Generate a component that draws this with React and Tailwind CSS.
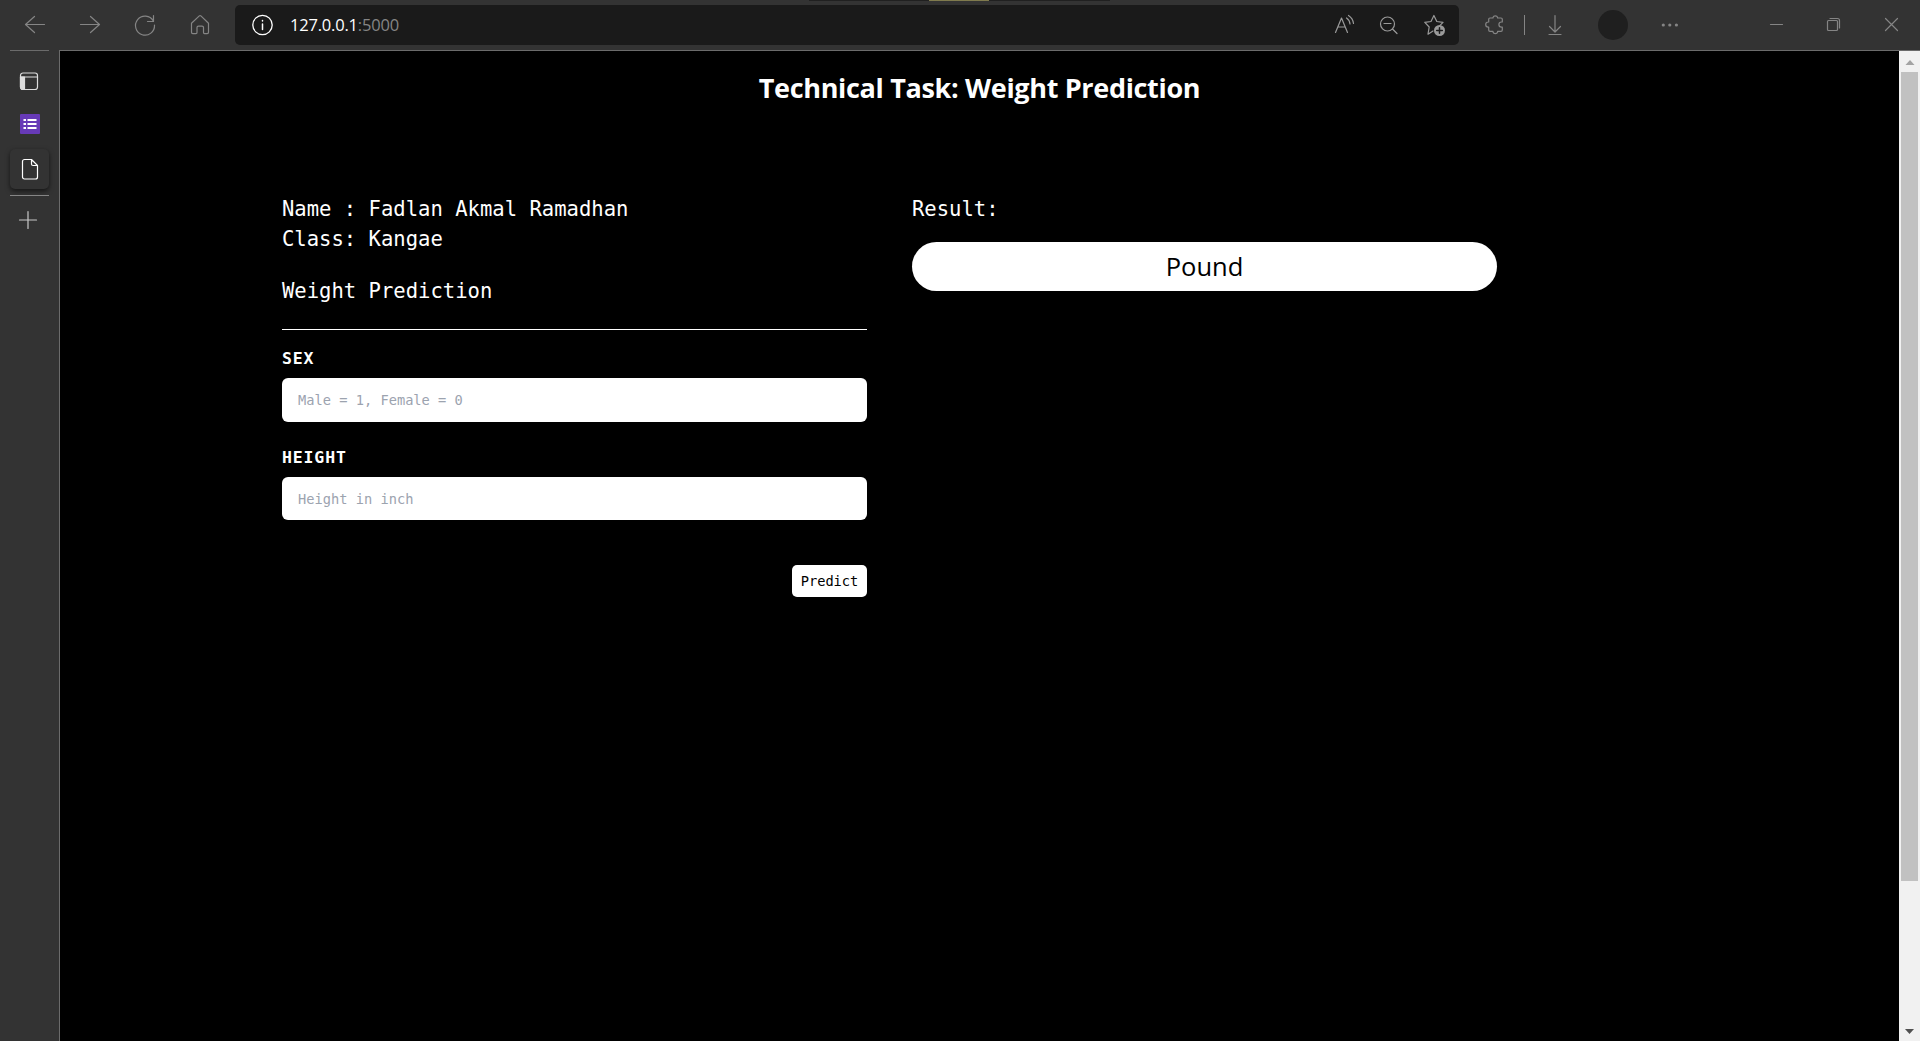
import React from "react";

const line = { fill: "none", stroke: "currentColor", strokeWidth: 1.2, strokeLinecap: "round", strokeLinejoin: "round" };

function Icon({ w = 24, h = 24, className = "", children }) {
  return (
    <svg width={w} height={h} viewBox={`0 0 ${w} ${h}`} className={`block shrink-0 ${className}`} {...line}>
      {children}
    </svg>
  );
}

function Toolbar() {
  return (
    <header className="flex h-[50px] w-full shrink-0 items-start bg-[#333333] text-[#858585]">
      <nav className="flex w-[235px] shrink-0 gap-[31px] pt-[13px] pl-[23px]">
        <Icon><path d="M2.5 11.5h19M11.5 3.5l-9 8 9 8" /></Icon>
        <Icon><path d="M2.5 11.5h19M12.500 3.500l9 8-9 8" /></Icon>
        <Icon><path d="M20.300 8A9.500 9.500 0 1 0 21.500 12M20.500 2.500v6h-6" /></Icon>
        <Icon><path d="M3.500 10.300L11.300 2.900a1.200 1.200 0 0 1 1.600 0L20.500 10.300v9a1.300 1.300 0 0 1-1.300 1.300H16.500a1 1 0 0 1-1-1v-5a1.500 1.500 0 0 0-1.500-1.500h-3.500a1.500 1.500 0 0 0-1.500 1.500v5a1 1 0 0 1-1 1H4.800a1.300 1.300 0 0 1-1.300-1.300z" /></Icon>
      </nav>
      <div className="mt-[5px] flex h-10 w-[1224px] shrink-0 items-center rounded-[5px] bg-[#1a1a1a] pl-[15px]">
        <Icon className="text-white">
          <circle cx="12.500" cy="12" r="9.700" strokeWidth="1.300" />
          <path d="M12.500 11v5.500M12.500 7.500v.5" strokeWidth="1.500" />
        </Icon>
        <p className="ml-4 font-['Open_Sans',sans-serif] text-[16.500px] leading-6 tracking-[-0.200px] text-[#858585]">
          <span className="text-white">127.0.0.1</span>:5000
        </p>
        <div className="ml-auto flex gap-[21px] pr-[11px] text-[#9a9a9a]">
          <Icon><path d="M1.500 19.500L7.500 5l6 14.500M3.800 14h7.400M12.500 5a8 8 0 0 1 3.500 6M14.500 2.500a11 11 0 0 1 5 8" /></Icon>
          <Icon><circle cx="8.500" cy="11" r="7" /><path d="M5 10.500h7M13.500 16l4.500 4.500" /></Icon>
          <Icon>
            <path d="M9 18l-5 3.200 1.200-7.200L.8 9.300l6.200-.8 2.900-6 2.900 6 6.200.8-3 3" />
            <circle cx="15.500" cy="17.500" r="5.500" fill="currentColor" stroke="none" />
            <path d="M12.700 17.500h5.600M15.500 14.700v5.600" stroke="#1a1a1a" strokeWidth="1.500" />
          </Icon>
        </div>
      </div>
      <div className="flex h-[50px] min-w-0 flex-1 items-center">
        <Icon className="ml-6">
          <path d="M7 5H10V4.500a2.400 2.400 0 0 1 4.600 0V5H18a1.300 1.300 0 0 1 1.300 1.300V9H18.500a2.500 2.500 0 0 0 0 5.200H19.300V17a1.300 1.300 0 0 1-1.300 1.300H14.600V19a2.400 2.400 0 0 1-4.600 0V18.300H7A1.300 1.300 0 0 1 5.700 17V14.200H5.300a2.500 2.500 0 0 1 0-5.200H5.700V6.300A1.300 1.300 0 0 1 7 5z" />
        </Icon>
        <div className="ml-[17px] h-5 w-px bg-[#858585]" />
        <Icon className="ml-[18px]"><path d="M12 2.500V19M6.500 13.500L12 19l5.500-5.500M6 21.500h12" /></Icon>
        <div className="ml-[31px] h-[30px] w-[30px] rounded-full bg-[#1f1f1f]" />
        <Icon className="ml-[30px]">
          <g fill="currentColor" stroke="none"><circle cx="5.300" cy="12" r="1.600" /><circle cx="11.800" cy="12" r="1.600" /><circle cx="18.400" cy="12" r="1.600" /></g>
        </Icon>
        <Icon className="ml-[84px]"><path d="M4.500 11.500h12" /></Icon>
        <Icon className="ml-[33px]"><rect x="4.500" y="7.500" width="10" height="10" rx="1" /><path d="M7 5.500h7.500a2 2 0 0 1 2 2V15" /></Icon>
        <Icon className="ml-[34px]"><path d="M4.500 5.500l12 12M16.500 5.500l-12 12" /></Icon>
      </div>
    </header>
  );
}

function Sidebar() {
  return (
    <aside className="flex w-[60px] shrink-0 flex-col border-r border-[#6b6b6b] bg-[#333333]">
      <div className="ml-2.5 h-px w-[39px] bg-[#6b6b6b]" />
      <Icon className="mt-[18px] ml-[18px] text-[#dddddd]">
        <rect x="2.500" y="4" width="17" height="16.500" rx="2.500" />
        <path d="M2.500 8h17" /><path d="M2.500 8H6.500v12.500H5A2.500 2.500 0 0 1 2.500 18z" fill="currentColor" />
      </Icon>
      <svg width="20" height="20" viewBox="0 0 20 20" className="mt-[21px] ml-5 block">
        <rect width="20" height="20" rx="1" fill="#673ab7" />
        <path d="M3.500 6H6M7.500 6h9M3.500 10H6M7.500 10h9M3.500 14H6M7.500 14h9" stroke="#fff" strokeWidth="2" />
      </svg>
      <div className="mt-[15px] ml-2.5 flex h-10 w-[39px] items-center justify-center rounded-[5px] bg-[#333333] text-white shadow-[0_2px_5px_rgba(0,0,0,0.6)]">
        <Icon><path d="M6.500 2.500h7l6 6v11.500a2 2 0 0 1-2 2h-11a2 2 0 0 1-2-2V4.500a2 2 0 0 1 2-2zM13.500 2.500V7a1.500 1.500 0 0 0 1.500 1.500h4.500" /></Icon>
      </div>
      <div className="mt-1.5 ml-2.5 h-px w-[39px] bg-[#858585]" />
      <Icon className="mt-3 ml-4 text-[#c8c8c8]"><path d="M3.500 12h17M12 3.500v17" /></Icon>
    </aside>
  );
}

function Field({ label, placeholder, className, inputClass }) {
  return (
    <label className={`block ${className}`}>
      <span className="block text-[16.500px] leading-[27px] font-bold tracking-[0.850px]">{label}</span>
      <input
        placeholder={placeholder}
        className={`block w-full rounded-[6px] bg-white px-4 text-[13.700px] text-black placeholder:text-[#9ca3af] ${inputClass}`}
      />
    </label>
  );
}

function Page() {
  return (
    <main className="min-w-0 flex-1 bg-black text-white">
      <h1 className="pt-[17px] text-center font-['Open_Sans',sans-serif] text-[27px] leading-10 font-bold tracking-[-0.330px]">
        Technical Task: Weight Prediction
      </h1>
      <div className="mt-[86px] ml-[222px] flex gap-[45px] font-['DejaVu_Sans_Mono',monospace]">
        <section className="w-[585px]">
          <div className="text-[20.550px] leading-[30px] whitespace-pre">
            <p>Name : Fadlan Akmal Ramadhan</p>
            <p>Class: Kangae</p>
            <p className="mt-[22px]">Weight Prediction</p>
          </div>
          <div className="mt-[23px] h-px bg-white" />
          <Field label="SEX" placeholder="Male = 1, Female = 0" className="mt-[15px]" inputClass="mt-1.5 h-11" />
          <Field label="HEIGHT" placeholder="Height in inch" className="mt-[22px]" inputClass="mt-1.5 h-[43px]" />
          <button className="mt-[45px] ml-auto block h-8 w-[75px] rounded-[5px] bg-white text-[13.700px] text-black">Predict</button>
        </section>
        <section className="w-[585px]">
          <h2 className="text-[20.550px] leading-[30px]">Result:</h2>
          <div className="mt-[18px] flex h-[49px] items-center justify-center rounded-full bg-white font-['Open_Sans',sans-serif] text-[25.500px] text-black">
            Pound
          </div>
        </section>
      </div>
    </main>
  );
}

function Scrollbar() {
  return (
    <div className="flex w-[21px] shrink-0 flex-col items-center bg-[#f1f1f1]">
      <svg width="17" height="21" viewBox="0 0 17 21"><path d="M4.500 14h9L9 9z" fill="#a3a3a3" /></svg>
      <div className="h-[809px] w-[17px] bg-[#c1c1c1]" />
      <svg width="17" height="21" viewBox="0 0 17 21" className="mt-auto"><path d="M4 9h9l-4.500 5z" fill="#505050" /></svg>
    </div>
  );
}

export default function App() {
  return (
    <div className="relative flex h-[1041px] w-[1920px] flex-col overflow-hidden bg-[#333333]">
      <div className="absolute top-0 left-[809px] h-px w-[301px] bg-[#202020] pl-[120px]">
        <div className="h-px w-[60px] bg-[#7f7a4d]" />
      </div>
      <Toolbar />
      <div className="flex min-h-0 flex-1">
        <Sidebar />
        <div className="flex min-w-0 flex-1 border-t border-[#6b6b6b]">
          <Page />
          <Scrollbar />
        </div>
      </div>
    </div>
  );
}
